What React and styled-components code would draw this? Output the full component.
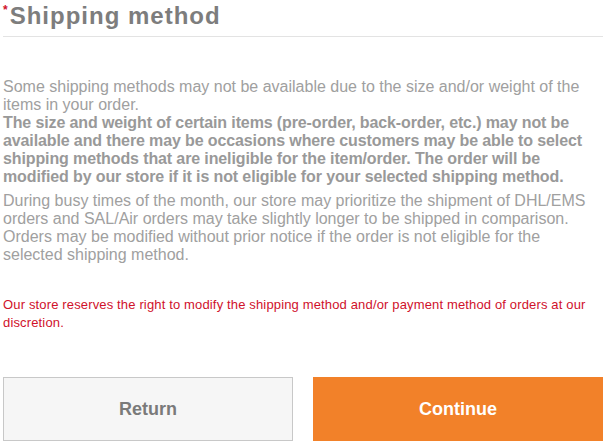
import styled, { createGlobalStyle } from 'styled-components';

const GlobalStyle = createGlobalStyle`
    body {
        margin: 0;
        background: #fff;
        font-family: "Liberation Sans", Arial, sans-serif;
    }
`

const Page = styled.div`
    width: 600px;
    padding: 0 3px;
`

const Header = styled.h2`
    margin: 1px 0 0;
    padding: 0 0 5px 0;
    border-bottom: 1px solid #e3e3e3;
    font-size: 24px;
    line-height: 30px;
    font-weight: bold;
    letter-spacing: 1px;
    color: #7d7d7d;
    display: flex;
    align-items: flex-start;
`

const Required = styled.span`
    color: #d0112b;
    font-size: 12px;
    line-height: 12px;
    letter-spacing: 0;
    margin: 3px 2px 0 0;
`

const Notes = styled.div`
    margin-top: 41px;
    color: #a0a0a0;
    font-size: 16px;
    line-height: 18px;
`

const Note = styled.p`
    margin: 0 0 ${p => p.$gap || 0}px;
    font-weight: ${p => (p.$strong ? 'bold' : 'normal')};
    letter-spacing: ${p => (p.$strong ? '-0.12px' : '0')};
    color: ${p => (p.$strong ? '#999' : '#a0a0a0')};
`

const Warning = styled.p`
    margin: 32px 0 0;
    color: #d0112b;
    font-size: 13px;
    line-height: 18px;
    letter-spacing: 0.15px;
`

const Actions = styled.div`
    display: flex;
    gap: 20px;
    margin-top: 45px;
`

const Button = styled.button`
    flex: 1;
    height: 64px;
    font-family: "Liberation Sans", Arial, sans-serif;
    font-size: 18px;
    font-weight: bold;
    cursor: pointer;
    border: 1px solid ${p => (p.$primary ? '#f28129' : '#c8c8c8')};
    background: ${p => (p.$primary ? '#f28129' : '#f6f6f6')};
    color: ${p => (p.$primary ? '#fff' : '#7a7a7a')};
`

const App = () => {
    return (
        <>
            <GlobalStyle />
            <Page>
                <Header>
                    <Required>*</Required>
                    Shipping method
                </Header>
                <Notes>
                    <Note>
                        Some shipping methods may not be available due to the size and/or weight of the
                        items in your order.
                    </Note>
                    <Note $strong $gap={6}>
                        The size and weight of certain items (pre-order, back-order, etc.) may not be
                        available and there may be occasions where customers may be able to select
                        shipping methods that are ineligible for the item/order. The order will be
                        modified by our store if it is not eligible for your selected shipping method.
                    </Note>
                    <Note>
                        During busy times of the month, our store may prioritize the shipment of DHL/EMS
                        orders and SAL/Air orders may take slightly longer to be shipped in comparison.
                        Orders may be modified without prior notice if the order is not eligible for the
                        selected shipping method.
                    </Note>
                </Notes>
                <Warning>
                    Our store reserves the right to modify the shipping method and/or payment method of
                    orders at our discretion.
                </Warning>
                <Actions>
                    <Button>Return</Button>
                    <Button $primary>Continue</Button>
                </Actions>
            </Page>
        </>
    );
}

export default App;
